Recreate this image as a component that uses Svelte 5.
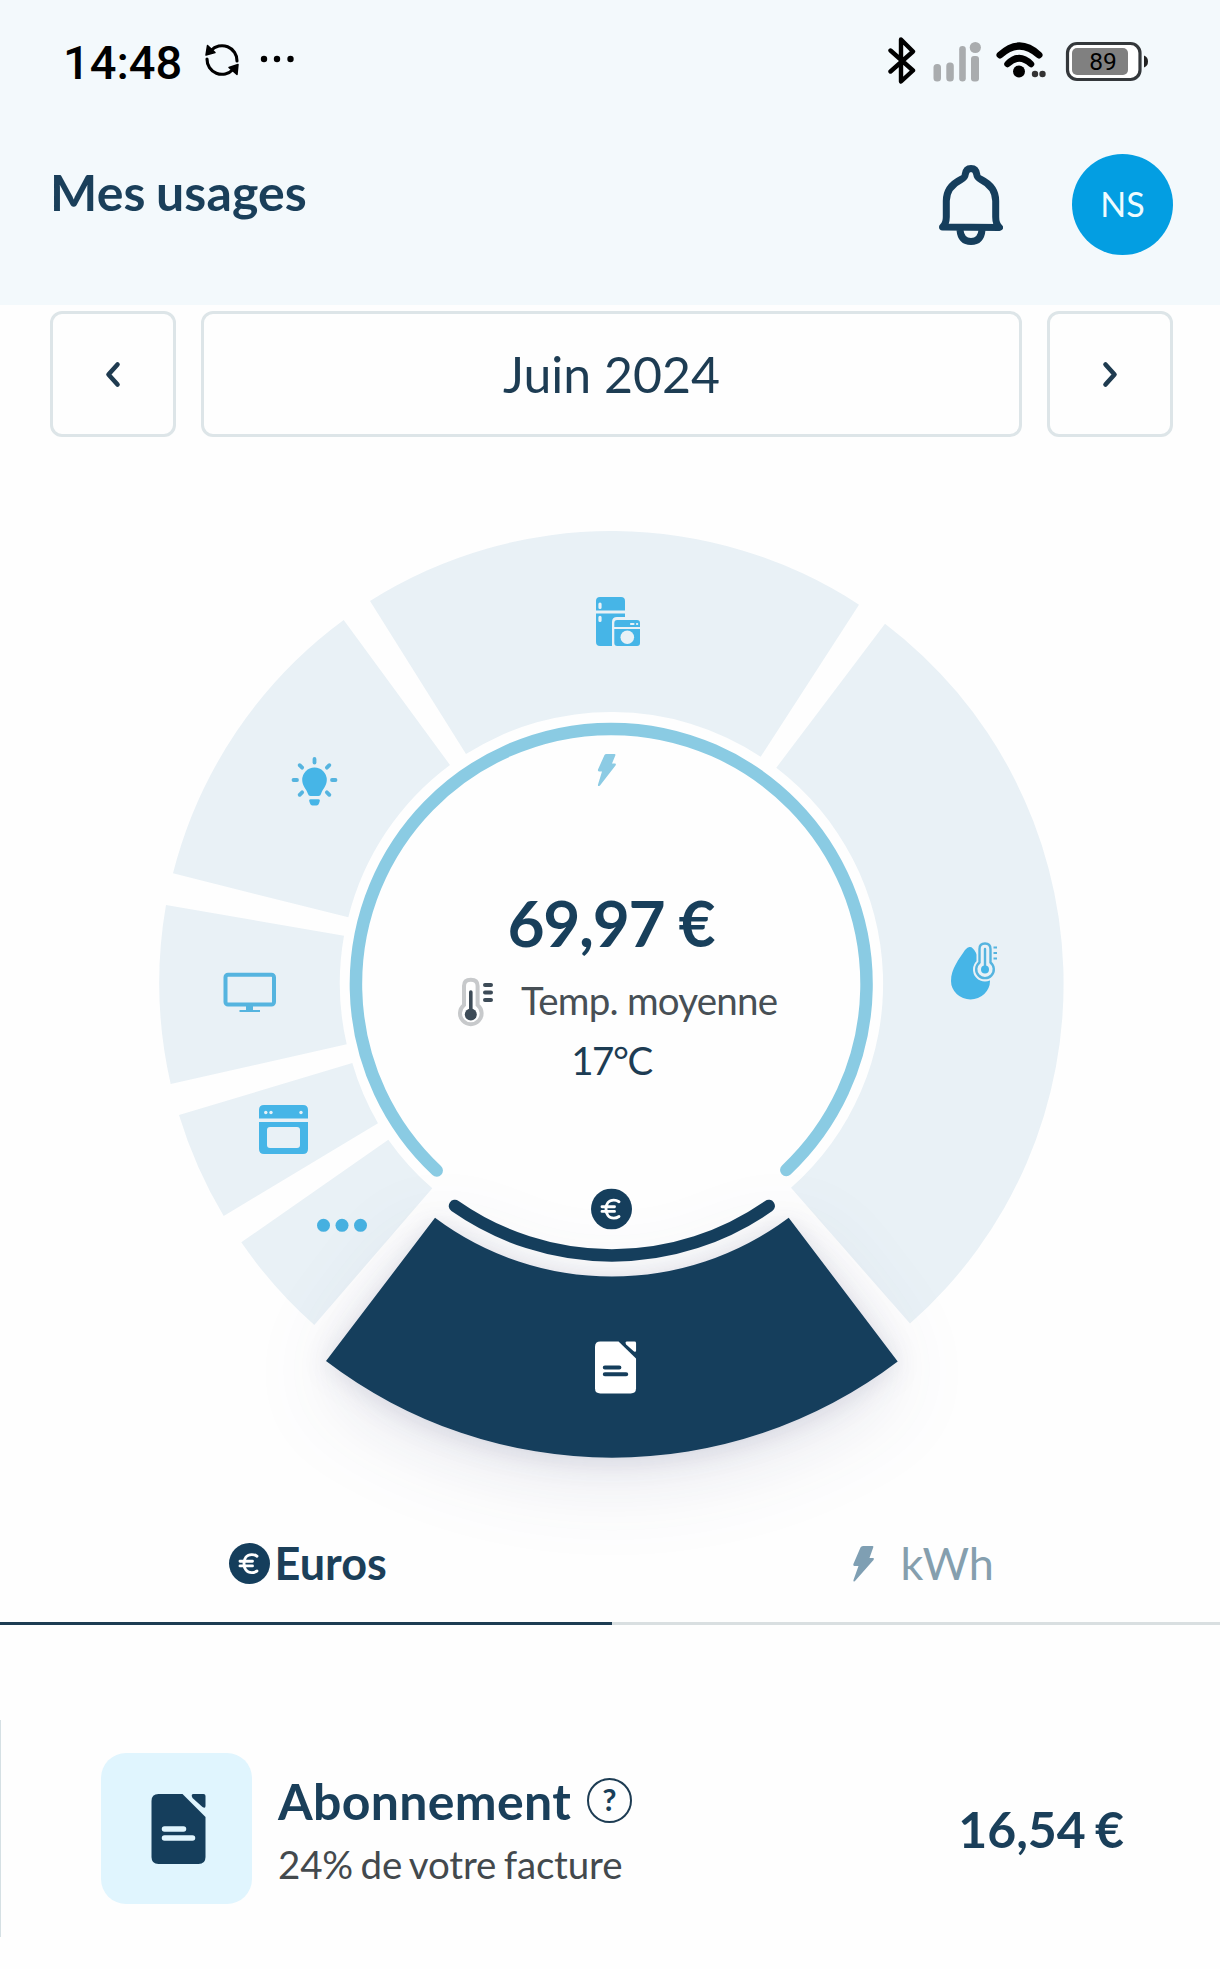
<script>
  const CX = 611.5;
  const segments = [
    { id: 'froid', d: 'M370 601A452.5 452.5 0 0 1 859 604.7L760.7 756.7A272 272 0 0 0 466 754Z' },
    { id: 'eau', d: 'M885 623.7A452.5 452.5 0 0 1 910 1323.6L791 1187.8A272 272 0 0 0 776.3 767.7Z' },
    { id: 'lumiere', d: 'M173 873.3A452.5 452.5 0 0 1 343.7 620L450 765A272 272 0 0 0 348.3 917.3Z' },
    { id: 'ecrans', d: 'M170.7 1084A452.5 452.5 0 0 1 166 905L344 935.7A272 272 0 0 0 346.7 1044.3Z' },
    { id: 'cuisson', d: 'M223.7 1216A452.5 452.5 0 0 1 179 1115L352.3 1063A272 272 0 0 0 378 1123.3Z' },
    { id: 'autres', d: 'M314.3 1325A452.5 452.5 0 0 1 241.3 1242.3L388.3 1139.7A272 272 0 0 0 432.3 1188.3Z' }
  ];
  const rays = [0, 45, 90, 135, 225, 270, 315];
</script>

{#snippet euro(cls)}
  <svg class={cls} viewBox="0 0 41 41" width="41" height="41">
    <circle cx="20.5" cy="20.5" r="20.5" fill="#153e5c" />
    <path d="M28 13.2Q25.6 11.6 22.8 11.6C17.6 11.6 15 15.5 15 20.5S17.6 29.6 22.8 29.6Q25.6 29.6 28 28M11 18.3H23.5M11 22.9H23.5" fill="none" stroke="#fff" stroke-width="2.9" stroke-linecap="round" />
  </svg>
{/snippet}

{#snippet doc(body, line)}
  <path d="M7 0H31L54 23V63Q54 70 47 70H7Q0 70 0 63V7Q0 0 7 0Z" fill={body} />
  <path d="M42 0H52Q54 0 54 2V12Q54 15 51 13L41 4Q39 0 42 0Z" fill={body} />
  <path d="M13 35H32M13 44H41" stroke={line} stroke-width="5.5" stroke-linecap="round" />
{/snippet}

<div class="screen">
  <header>
    <div class="status">
      <span class="time">14:48</span>
      <svg class="sync" width="34" height="34" viewBox="0 0 34 34">
        <g fill="none" stroke="#000" stroke-width="3.1" stroke-linecap="round">
          <path d="M6 7.5A15 15 0 0 1 32 18" />
          <path d="M28 26.5A15 15 0 0 1 2 16" />
        </g>
        <path d="M2.5 2.5L10 9.5L1 12ZM32 31.5L24 24.5L33 21.5Z" stroke="#000" stroke-width="1.5" stroke-linejoin="round" />
      </svg>
      <svg class="more" width="34" height="8" viewBox="0 0 34 8">
        <circle cx="4" cy="4" r="3.2" /><circle cx="17" cy="4" r="3.2" /><circle cx="30.5" cy="4" r="3.2" />
      </svg>
      <svg class="system" width="270" height="50" viewBox="0 0 270 50">
        <path d="M2.5 14.5L25 34.5L13 45.500V3.500L25 15.500L2.500 35.500" fill="none" stroke="#000" stroke-width="4.4" stroke-linecap="round" stroke-linejoin="round" />
        <g fill="#a9acae">
          <rect x="45.5" y="28" width="7.5" height="17.5" rx="3.5" />
          <rect x="58.3" y="26.5" width="7.5" height="19" rx="3.5" />
          <rect x="71.2" y="10" width="6.6" height="35.5" rx="3.3" />
          <rect x="83" y="20" width="8" height="25.5" rx="3" />
          <circle cx="87.3" cy="11.5" r="5.6" />
        </g>
        <path d="M112 19Q131.5 1 151 19" fill="none" stroke="#000" stroke-width="7" stroke-linecap="round" />
        <path d="M119.5 28Q131 16.5 143 28" fill="none" stroke="#000" stroke-width="6.5" stroke-linecap="round" />
        <circle cx="131" cy="35.5" r="6" />
        <circle cx="147" cy="38" r="3.2" fill="#333" /><circle cx="154.5" cy="38" r="3.2" fill="#333" />
        <rect x="179.5" y="7.5" width="72.5" height="36" rx="9.5" fill="#fff" stroke="#34383b" stroke-width="3.2" />
        <rect x="184" y="12" width="56" height="27" rx="5" fill="#808080" />
        <path d="M256 19.500Q260 21 260 25.500T256 31.500Z" fill="#222" />
        <text x="215" y="34" text-anchor="middle" class="charge">89</text>
      </svg>
    </div>
    <div class="titlebar">
      <h1>Mes usages</h1>
      <svg class="bell" width="64" height="80" viewBox="0 0 64 80">
        <path d="M3.5 62Q7.3 59 7.3 52V36C7.3 25 14 18.5 22 14.5C26 12.5 26 11.5 26.2 9.5Q27 3.5 32 3.5T37.8 9.5C38 11.5 38 12.5 42 14.5C50 18.5 56.7 25 56.7 36V52Q56.7 59 60.5 62.5Z" fill="none" stroke="#153e5c" stroke-width="7" stroke-linejoin="round" />
        <path d="M21 65Q22 76.5 32 76.5T43 65" fill="none" stroke="#153e5c" stroke-width="7" />
      </svg>
      <div class="avatar">NS</div>
    </div>
  </header>

  <nav class="months">
    <button class="step" aria-label="Mois précédent">
      <svg width="16" height="28" viewBox="0 0 16 28"><path d="M12.5 4.5L3.5 14.5L12.5 24.5" /></svg>
    </button>
    <div class="month">Juin 2024</div>
    <button class="step" aria-label="Mois suivant">
      <svg width="16" height="28" viewBox="0 0 16 28"><path d="M3.5 4.5L12.5 14.5L3.5 24.5" /></svg>
    </button>
  </nav>

  <svg class="chart" width="1220" height="1066" viewBox="0 437 1220 1066">
    <defs>
      <filter id="lift" filterUnits="userSpaceOnUse" x="100" y="1000" width="1020" height="720" color-interpolation-filters="sRGB">
        <feGaussianBlur in="SourceAlpha" stdDeviation="42" result="wideBlur" />
        <feOffset in="wideBlur" dy="18" result="wideOffset" />
        <feFlood flood-color="#2b3570" flood-opacity=".12" />
        <feComposite in2="wideOffset" operator="in" result="wide" />
        <feGaussianBlur in="SourceAlpha" stdDeviation="13" result="nearBlur" />
        <feOffset in="nearBlur" dy="3" result="nearOffset" />
        <feFlood flood-color="#2b3060" flood-opacity=".13" />
        <feComposite in2="nearOffset" operator="in" result="near" />
        <feMerge>
          <feMergeNode in="wide" /><feMergeNode in="near" /><feMergeNode in="SourceGraphic" />
        </feMerge>
      </filter>
    </defs>

    <g fill="#e9f1f6">
      {#each segments as s (s.id)}<path d={s.d} />{/each}
    </g>
    <path d="M326 1361L435 1217.7A295 295 0 0 0 788.7 1217.7L897.7 1361.5A472 472 0 0 1 326 1361Z" fill="#153e5c" filter="url(#lift)" />
    <path d="M436.7 1170.5A255.3 255.3 0 1 1 786.3 1170" class="ring light" />
    <path d="M455 1206A273.7 273.7 0 0 0 768.7 1206" class="ring dark" />

    <!-- fridge and washing machine -->
    <g transform="translate(596 597)">
      <path d="M4 0H25Q29 0 29 4V13.5H0V4Q0 0 4 0ZM0 16.5H29V20H21Q16 20 16 25V49H4Q0 49 0 45Z" fill="#46b5e7" />
      <path d="M18.3 26Q18.3 23 21.3 23H41Q44 23 44 26V30H18.3ZM18.3 32H44V46Q44 49 41 49H21.3Q18.3 49 18.3 46Z" fill="#46b5e7" />
      <circle cx="31.3" cy="40.3" r="6.8" fill="#e9f1f6" />
      <path d="M4 7V10.5M4 20.3V23.5" stroke="#e9f1f6" stroke-width="3.2" stroke-linecap="round" />
      <path d="M35 27H37.5M41 27H41.2" stroke="#e9f1f6" stroke-width="2.2" stroke-linecap="round" />
    </g>

    <!-- light bulb -->
    <g transform="translate(314.5 780)">
      <path d="M0 -12.5A12.3 12.3 0 0 1 12.3 0C12.3 6 8 9 6.5 14Q6 16 4 16H-4Q-6 16 -6.5 14C-8 9 -12.3 6 -12.3 0A12.3 12.3 0 0 1 0 -12.5Z" fill="#46b5e7" />
      <path d="M-4 19.3H4Q6 19.5 5 22Q4 25.5 2 25.5H-2Q-4 25.5 -5 22Q-6 19.5 -4 19.3Z" fill="#46b5e7" />
      {#each rays as a (a)}
        <path d="M0 -17.5V-21" transform="rotate({a})" stroke="#55b4df" stroke-width="3.8" stroke-linecap="round" />
      {/each}
    </g>

    <!-- screen -->
    <g transform="translate(223.5 973)">
      <rect x="2" y="1.8" width="48.5" height="29.8" rx="2.5" fill="none" stroke="#55b4df" stroke-width="4" />
      <path d="M22.5 32H29.5V37H36.5V39H16V37H22.5Z" fill="#55b4df" />
    </g>

    <!-- oven -->
    <g transform="translate(259 1105)">
      <path d="M5 0H44Q49 0 49 5V13.5H0V5Q0 0 5 0ZM0 17H49V44Q49 49 44 49H5Q0 49 0 44Z" fill="#46b5e7" />
      <rect x="8" y="22" width="33" height="21" rx="3" fill="#e9f1f6" />
      <circle cx="6.8" cy="7.5" r="1.7" fill="#e9f1f6" /><circle cx="12" cy="7.5" r="1.7" fill="#e9f1f6" /><circle cx="42" cy="7.5" r="1.7" fill="#e9f1f6" />
    </g>

    <g fill="#46b0e0">
      <circle cx="323.5" cy="1225.3" r="6.5" /><circle cx="342" cy="1225.3" r="6.5" /><circle cx="360.5" cy="1225.3" r="6.5" />
    </g>

    <!-- hot water -->
    <g transform="translate(951 941)">
      <path d="M19 6C23 6 26 14 31 23C35 30 39 33 39 40A19.5 18.5 0 0 1 0 40C0 28 8 18 14 9Q17 5.5 19 6Z" fill="#46b5e7" />
      <path d="M27.5 7.5Q27.5 1 34 1T40.5 7.5V21A10 10 0 1 1 27.5 21Z" fill="#e9f1f6" stroke="#e9f1f6" stroke-width="4" />
      <path d="M28.5 8Q28.5 2.5 34 2.5T39.5 8V21.5A8.8 8.8 0 1 1 28.5 21.5Z" fill="#e9f1f6" stroke="#55b4df" stroke-width="2.4" />
      <path d="M34 8V26" stroke="#55b4df" stroke-width="2.4" stroke-linecap="round" />
      <circle cx="34" cy="28.5" r="4" fill="#46b5e7" />
      <path d="M42.5 6.5H46M42.5 12H46M42.5 17.5H46" stroke="#55b4df" stroke-width="2" />
    </g>

    <path d="M606.5 754H614.5Q615.8 754 615.3 755.5L612 763.5H615Q616.5 763.8 615.5 765.5L600 785.5Q597.5 787 598 784.5L602 771.5H599Q597.5 771.3 598 769.5L604.5 755Q605 754 606.5 754Z" fill="#8ccbe4" />

    <text x={CX} y="946.5" class="total" text-anchor="middle" textLength="208" lengthAdjust="spacing">69,97 €</text>
    <g transform="translate(458 978)">
      <path d="M6 8Q6 1.8 12.8 1.8T19.6 8V27A10.8 10.8 0 1 1 6 27Z" fill="#fff" stroke="#c7c9cb" stroke-width="4" />
      <path d="M12.8 14V36" stroke="#3d4b57" stroke-width="3.6" stroke-linecap="round" />
      <circle cx="12.8" cy="36.5" r="6" fill="#3d4b57" />
      <path d="M27 7H33M27 14.5H33M27 22H33" stroke="#3d4b57" stroke-width="4" stroke-linecap="round" />
    </g>
    <text x="521" y="1014.5" class="temp" textLength="257">Temp. moyenne</text>
    <text x={CX} y="1074.5" class="degree" text-anchor="middle">17°C</text>
    <g transform="translate(591 1188.5)">{@render euro('')}</g>
    <g transform="translate(595 1341.5) scale(.76 .743)">{@render doc('#fff', '#153e5c')}</g>
  </svg>

  <div class="tabs">
    <div class="tab active">{@render euro('coin')}<span>Euros</span></div>
    <div class="tab">
      <svg class="bolt" width="21" height="36" viewBox="0 0 21 36"><path d="M10 0H19.5Q20.8 0 20.2 1.5L16.5 12H20Q21.5 12.3 20.5 14L2 35Q0 36.5 .5 34L5.5 20H1.5Q0 19.8 .4 18L7.5 1.5Q8.2 0 10 0Z" fill="#7f9fb3" /></svg>
      <span>kWh</span>
    </div>
  </div>

  <section class="card">
    <div class="tile">
      <svg width="55" height="70" viewBox="0 0 54 70">{@render doc('#153e5c', '#e0f5fe')}</svg>
    </div>
    <div class="info">
      <div class="name"><span>Abonnement</span><i class="help">?</i></div>
      <div class="share">24% de votre facture</div>
    </div>
    <div class="amount">16,54 €</div>
  </section>
</div>

<style>
  :global(body) { margin: 0; background: #fefefe; }
  .screen {
    width: 1220px; height: 1969px; overflow: hidden; background: #fefefe;
    font-family: Lato, 'Open Sans', sans-serif; color: #1a3f5a;
  }
  header { height: 305px; background: #f3f9fc; }
  .status { display: flex; align-items: center; height: 122px; padding-left: 63px; }
  .time { font: 500 47px/1 Roboto, sans-serif; color: #000; width: 142px; padding-top: 2px; }
  .sync { margin-bottom: 3px; }
  .more { margin: 0 0 4px 21px; }
  .system { margin-left: 594px; }
  .charge { font: 400 24.5px Roboto, sans-serif; }
  .titlebar { display: flex; align-items: center; height: 165px; padding: 0 47px 0 50px; }
  h1 { margin: 0 auto 25px 0; font-size: 50px; font-weight: 700; line-height: 60px; word-spacing: -2px; letter-spacing: .15px; }
  .avatar {
    width: 101px; height: 101px; margin-left: 69px; border-radius: 50%; background: #039ee2;
    color: #effcff; font-size: 34px; line-height: 100px; text-align: center;
  }
  .months { display: flex; gap: 25px; padding: 6px 47px 0 50px; }
  .step, .month {
    box-sizing: border-box; height: 126px; border: 3px solid #dde5e8; border-radius: 12px;
    background: none;
  }
  .step { width: 126px; padding: 0; display: grid; place-items: center; }
  .step path { fill: none; stroke: #1f3b50; stroke-width: 4.6; stroke-linecap: round; stroke-linejoin: round; }
  .month { flex: 1; font-size: 50px; line-height: 121px; text-align: center; color: #1d3c53; }
  .chart { display: block; overflow: visible; }
  .ring { fill: none; stroke-width: 12.5; stroke-linecap: round; }
  .light { stroke: #8acbe3; }
  .dark { stroke: #153e5c; }
  .total { font-size: 64px; font-weight: 700; fill: #183f5b; }
  .temp { font-size: 38.5px; fill: #474f55; }
  .degree { font-size: 38.5px; fill: #1d3c53; letter-spacing: -1.4px; }
  .tabs { position: relative; display: flex; height: 122px; }
  .tab {
    box-sizing: border-box; width: 608px; display: flex; align-items: center;
    border-bottom: 3px solid #d9dfe1; font-size: 45px; line-height: 54px; color: #859fae;
    padding-left: 241px;
  }
  .tab.active { width: 612px; padding-left: 228.5px; border-color: #1d3c53; color: #1b3f59; font-weight: 700; }
  .coin { margin: 2px 5px 0 0; }
  .bolt { margin: 2px 26.5px 0 0; }
  .card {
    display: flex; align-items: center; height: 217px; margin-top: 95px; padding: 0 96px 0 100px;
    border-left: 1px solid #d5e0e4;
  }
  .tile { width: 151px; height: 151px; border-radius: 25px; background: #e0f5fe; display: grid; place-items: center; }
  .tile svg { margin-left: 3px; }
  .info { margin-left: 26px; flex: 1; }
  .name { display: flex; align-items: center; gap: 16px; font-size: 50px; font-weight: 700; line-height: 60px; letter-spacing: .32px; }
  .help {
    box-sizing: border-box; width: 45px; height: 45px; border: 2.5px solid #1d3c53; border-radius: 50%;
    font: 700 31px/39px Lato, sans-serif; text-align: center;
  }
  .share { font-size: 38.5px; line-height: 46px; margin-top: 10px; color: #43494d; word-spacing: -2.2px; letter-spacing: -.15px; }
  .amount { font-size: 50px; font-weight: 700; line-height: 60px; word-spacing: -3px; }
</style>
